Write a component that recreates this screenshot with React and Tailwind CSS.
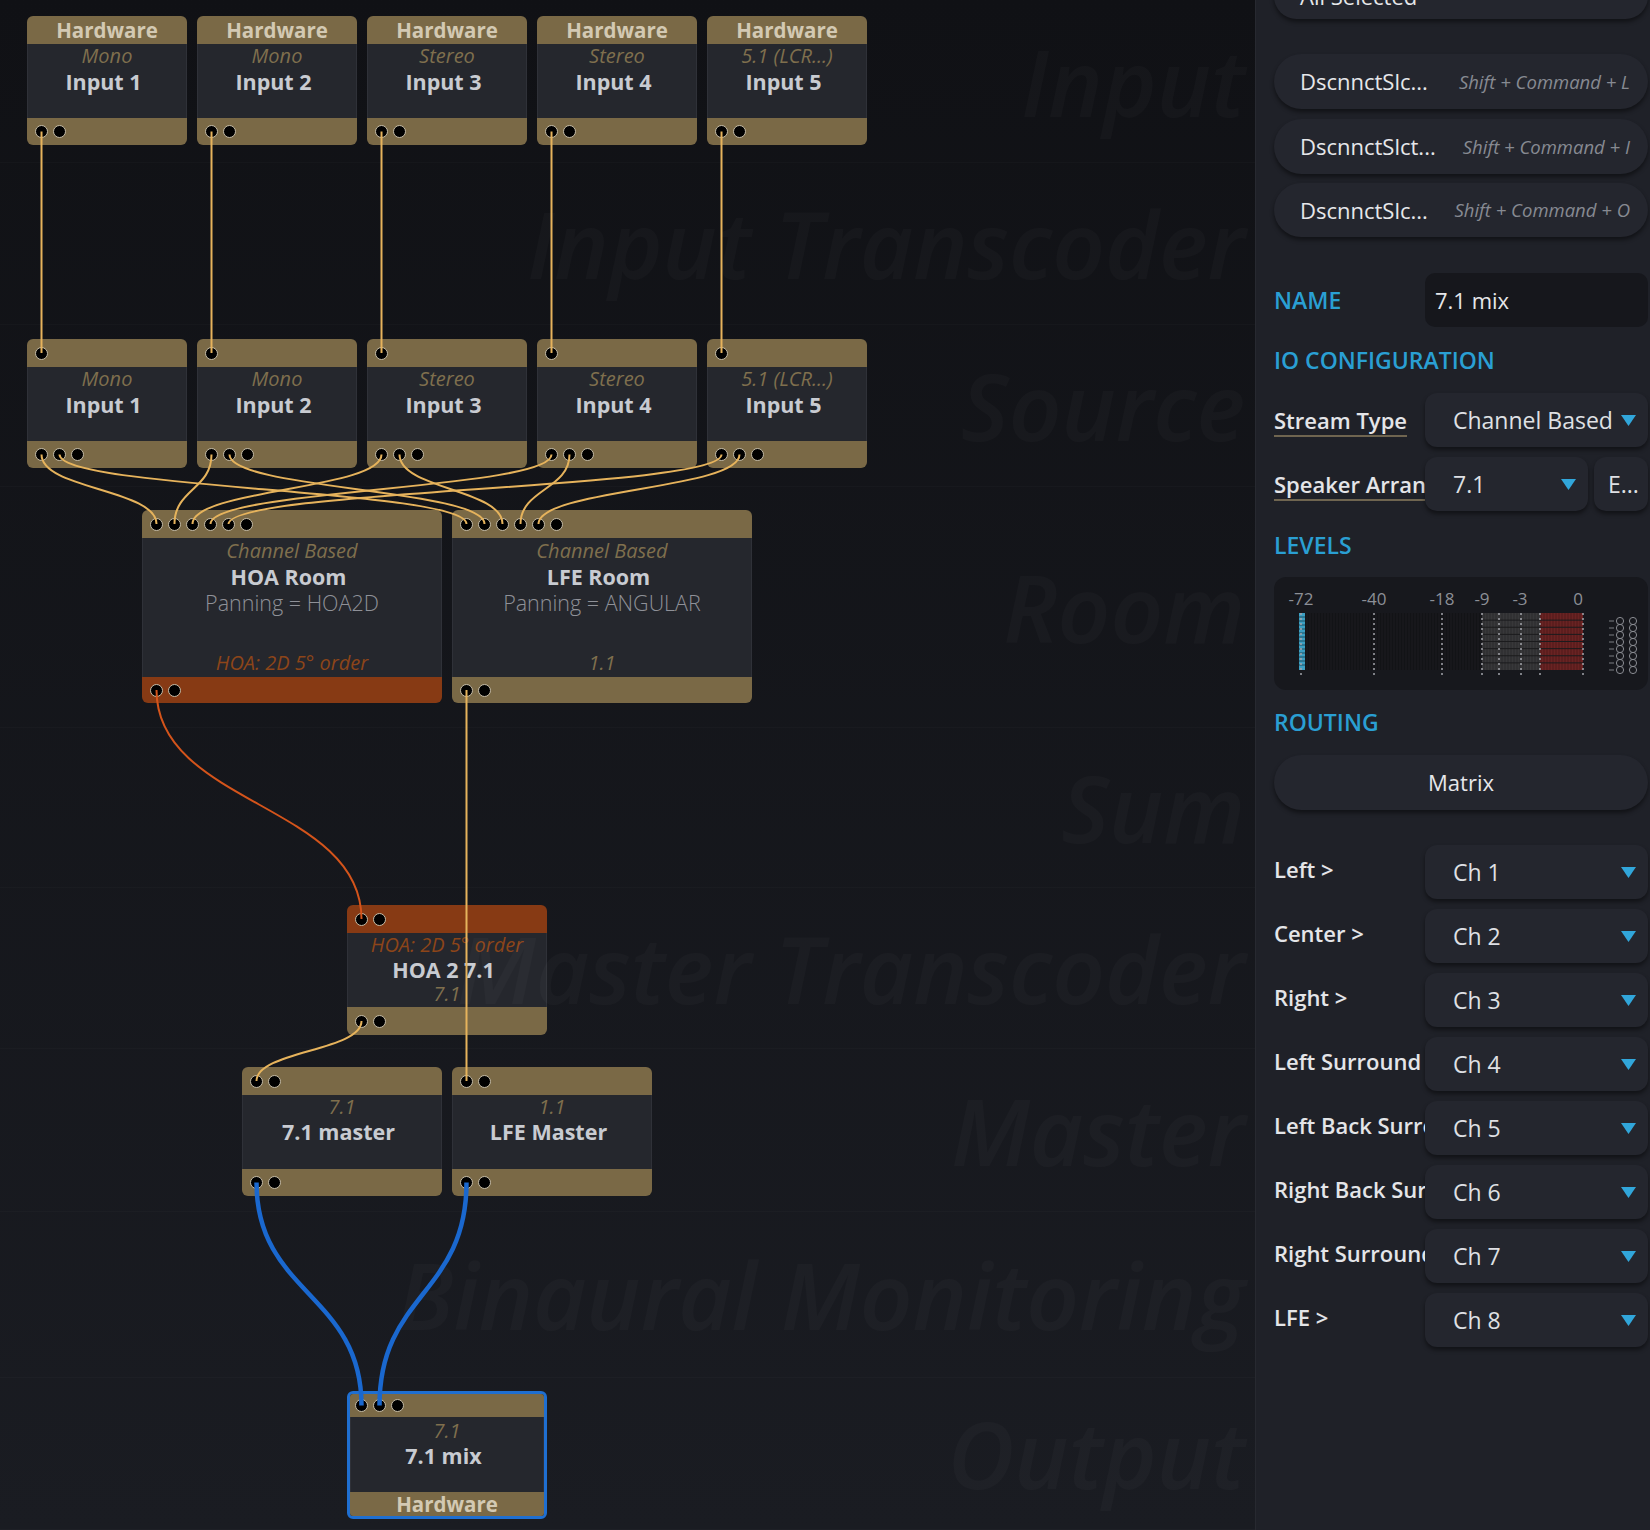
import React from 'react';

const lanes = [
  ['Input', 163],
  ['Input Transcoder', 162],
  ['Source', 162],
  ['Room', 241],
  ['Sum', 160],
  ['Master Transcoder', 161],
  ['Master', 163],
  ['Binaural Monitoring', 166],
  ['Output', 152],
];

const inputTypes = ['Mono', 'Mono', 'Stereo', 'Stereo', '5.1 (LCR...)'];

const Sub = ({ children, orange, className = '' }) => (
  <span className={`italic text-[20px] leading-[22px] ${orange ? 'text-[#8d4519]' : 'text-[#7f6f4d]'} ${className}`}>{children}</span>
);
const Title = ({ children, className = '' }) => (
  <span className={`pr-[7px] font-bold text-[21.5px] leading-[26px] text-[#c8cbd1] ${className}`}>{children}</span>
);

const Port = () => <span className="block h-[13px] w-[13px] shrink-0 rounded-full border-[1.5px] border-[#c6bda8] bg-black" />;

const Band = ({ h, tone, ports, label, pad }) => (
  <div
    className={`flex items-center ${tone === 'orange' ? 'bg-[#873a14]' : 'bg-[#7a6946]'} ${label ? 'justify-center' : ''}`}
    style={{ height: h }}
  >
    {label ? (
      <span className="text-[20.5px] font-bold leading-none text-[#d3c9b3]">{label}</span>
    ) : (
      <div className={`flex items-center gap-[5px] ${pad === 'tight' ? 'pl-[5px]' : 'pl-[8px]'}`}>
        {Array.from({ length: ports }).map((_, i) => (
          <Port key={i} />
        ))}
      </div>
    )}
  </div>
);

const Node = ({ n }) => (
  <div
    className={`absolute overflow-hidden rounded-[6px] ${n.selected ? 'border-[3px] border-[#1f6fd1]' : ''}`}
    style={{ left: n.x, top: n.y, width: n.w }}
  >
    <Band h={n.topH} tone={n.topTone} ports={n.topPorts} label={n.topLabel} pad={n.pad} />
    <div className="flex flex-col items-center border-x border-[#2f3138] bg-[#25272d]" style={{ height: n.bodyH }}>
      {n.body}
    </div>
    <Band h={n.bottomH} tone={n.bottomTone} ports={n.bottomPorts} label={n.bottomLabel} pad={n.pad} />
  </div>
);

const nodes = [];
inputTypes.forEach((t, i) => {
  nodes.push({
    x: 27 + 170 * i, y: 16, w: 160, topH: 28, topLabel: 'Hardware', bodyH: 74, bottomH: 27, bottomPorts: 2,
    body: (
      <>
        <Sub className="pt-[1px]">{t}</Sub>
        <Title className="mt-[2px]">Input {i + 1}</Title>
      </>
    ),
  });
  nodes.push({
    x: 27 + 170 * i, y: 339, w: 160, topH: 28, topPorts: 1, bodyH: 74, bottomH: 27, bottomPorts: 3,
    body: (
      <>
        <Sub className="pt-[1px]">{t}</Sub>
        <Title className="mt-[2px]">Input {i + 1}</Title>
      </>
    ),
  });
});
nodes.push({
  x: 142, y: 510, w: 300, topH: 28, topPorts: 6, bodyH: 139, bottomH: 26, bottomPorts: 2, bottomTone: 'orange',
  body: (
    <>
      <Sub className="leading-[26px]">Channel Based</Sub>
      <Title>HOA Room</Title>
      <span className="text-[21.5px] font-light leading-[26px] text-[#8f9198]">Panning = HOA2D</span>
      <Sub orange className="mt-auto mb-[1px] leading-[26px]">HOA: 2D 5° order</Sub>
    </>
  ),
});
nodes.push({
  x: 452, y: 510, w: 300, topH: 28, topPorts: 6, bodyH: 139, bottomH: 26, bottomPorts: 2,
  body: (
    <>
      <Sub className="leading-[26px]">Channel Based</Sub>
      <Title>LFE Room</Title>
      <span className="text-[21.5px] font-light leading-[26px] text-[#8f9198]">Panning = ANGULAR</span>
      <Sub className="mt-auto mb-[1px] leading-[26px]">1.1</Sub>
    </>
  ),
});
nodes.push({
  x: 347, y: 905, w: 200, topH: 28, topPorts: 2, topTone: 'orange', bodyH: 74, bottomH: 28, bottomPorts: 2,
  body: (
    <>
      <Sub orange className="leading-[24px]">HOA: 2D 5° order</Sub>
      <Title>HOA 2 7.1</Title>
      <Sub>7.1</Sub>
    </>
  ),
});
nodes.push({
  x: 242, y: 1067, w: 200, topH: 28, topPorts: 2, bodyH: 74, bottomH: 27, bottomPorts: 2,
  body: (
    <>
      <Sub className="pt-[1px]">7.1</Sub>
      <Title className="mt-[1px]">7.1 master</Title>
    </>
  ),
});
nodes.push({
  x: 452, y: 1067, w: 200, topH: 28, topPorts: 2, bodyH: 74, bottomH: 27, bottomPorts: 2,
  body: (
    <>
      <Sub className="pt-[1px]">1.1</Sub>
      <Title className="mt-[1px]">LFE Master</Title>
    </>
  ),
});
nodes.push({
  x: 347, y: 1391, w: 200, selected: true, pad: 'tight', topH: 23, topPorts: 3, bodyH: 75, bottomH: 24, bottomLabel: 'Hardware',
  body: (
    <>
      <Sub className="pt-[3px]">7.1</Sub>
      <Title className="mt-[1px]">7.1 mix</Title>
    </>
  ),
});

const curve = (x1, y1, x2, y2) => {
  const c = Math.max((y2 - y1) * 0.5, 20);
  return `M${x1} ${y1} C${x1} ${y1 + c} ${x2} ${y2 - c} ${x2} ${y2}`;
};

const Wires = () => {
  const gold = [];
  for (let i = 0; i < 5; i++) {
    const x = 27 + 170 * i + 14.5;
    gold.push(`M${x} 131.5 L${x} 353`);
    gold.push(curve(x, 454.5, 156.5 + 18 * i, 524));
    gold.push(curve(x + 18, 454.5, 466.5 + 18 * i, 524));
  }
  gold.push(`M466.5 690 L466.5 1081`);
  gold.push(curve(361.5, 1021, 256.5, 1081));
  return (
    <svg className="pointer-events-none absolute left-0 top-0" width="1255" height="1530" fill="none">
      {gold.map((d, i) => (
        <path key={i} d={d} stroke="#e6b35c" strokeWidth="2" />
      ))}
      <path d={curve(156.5, 690, 361.5, 919)} stroke="#d4541b" strokeWidth="2" />
      <path d={curve(256.5, 1182.5, 361.5, 1405.5)} stroke="#1a68cf" strokeWidth="4.5" />
      <path d={curve(466.5, 1182.5, 379.5, 1405.5)} stroke="#1a68cf" strokeWidth="4.5" />
    </svg>
  );
};

const Tri = () => (
  <svg width="15" height="11" viewBox="0 0 15 11" className="shrink-0">
    <polygon points="0,0 15,0 7.5,11" fill="#31a6da" />
  </svg>
);

const Pill = ({ label, keys, className }) => (
  <div className={`flex shrink-0 items-center justify-between rounded-full bg-[#24262e] pl-[26px] pr-[18px] shadow-[0_3px_4px_rgba(0,0,0,0.45)] ${className}`}>
    <span className="text-[22px] text-[#e6e7ea]">{label}</span>
    {keys && <span className="text-[18.5px] italic text-[#878a92]">{keys}</span>}
  </div>
);

const Select = ({ value, className = '' }) => (
  <div className={`flex h-[54px] items-center justify-between rounded-[12px] bg-[#24262e] pl-[28px] pr-[12px] shadow-[0_3px_4px_rgba(0,0,0,0.45)] ${className}`}>
    <span className="text-[23px] text-[#dfe0e4]">{value}</span>
    <Tri />
  </div>
);

const Heading = ({ children, className }) => (
  <div className={`h-[30px] text-[23px] font-semibold leading-[30px] text-[#2a9fd3] ${className}`}>{children}</div>
);

const Meter = () => {
  const ticks = [27, 100, 168, 208, 225, 247, 266, 309];
  const labels = [['-72', 27], ['-40', 100], ['-18', 168], ['-9', 208], ['-3', 246], ['0', 304]];
  const stripes = [];
  for (let x = 33; x < 309; x += 3) stripes.push(x);
  const rows = [1, 2, 3, 4, 5, 6, 7];
  const cells = [0, 1, 2, 3, 4, 5, 6, 7];
  return (
    <div className="mt-[17px] h-[113px] shrink-0 rounded-[12px] bg-[#17181d]">
      <svg width="374" height="113" className="block">
        <rect x="31" y="36" width="177" height="57" fill="#121316" />
        <rect x="208" y="36" width="58" height="57" fill="#38383a" />
        <rect x="266" y="36" width="43" height="57" fill="#6a2323" />
        {stripes.map((x) => (
          <line key={x} x1={x} y1="36" x2={x} y2="93" stroke={x < 208 ? '#1c1d21' : x < 266 ? '#2a2a2c' : '#511a1a'} strokeWidth="1" />
        ))}
        {rows.map((r) => (
          <line key={r} x1="208" y1={36 + r * 7.125} x2="309" y2={36 + r * 7.125} stroke="#1b1b1d" strokeWidth="1" />
        ))}
        <rect x="25" y="36" width="6" height="57" fill="#3c9fc2" />
        {[40, 44, 48, 52, 56, 60, 64, 68, 72, 76, 80, 84, 88].map((y) => (
          <line key={y} x1="25" y1={y} x2="31" y2={y} stroke="#1d4f61" strokeWidth="1" />
        ))}
        {ticks.map((x) => (
          <line key={x} x1={x} y1="36" x2={x} y2="99" stroke="#a2a4aa" strokeWidth="1.5" strokeDasharray="2 3" />
        ))}
        {labels.map(([t, x]) => (
          <text key={t} x={x} y="28" fontSize="17" fill="#8c8f96" textAnchor="middle" fontFamily="'Open Sans', sans-serif">
            {t}
          </text>
        ))}
        {cells.map((c) => (
          <g key={c}>
            <line x1="335" y1={44 + c * 7} x2="340" y2={44 + c * 7} stroke="#7c7e84" strokeWidth="1" />
            <circle cx="346" cy={44 + c * 7} r="3.6" fill="none" stroke="#8a8c92" strokeWidth="1" />
            <circle cx="359" cy={44 + c * 7} r="3.6" fill="none" stroke="#8a8c92" strokeWidth="1" />
          </g>
        ))}
      </svg>
    </div>
  );
};

const routes = [
  ['Left >', 'Ch 1'],
  ['Center >', 'Ch 2'],
  ['Right >', 'Ch 3'],
  ['Left Surround >', 'Ch 4'],
  ['Left Back Surround >', 'Ch 5'],
  ['Right Back Surround >', 'Ch 6'],
  ['Right Surround >', 'Ch 7'],
  ['LFE >', 'Ch 8'],
];

const Row = ({ label, children, className = '', accent }) => (
  <div className={`flex h-[54px] shrink-0 items-center ${className}`}>
    <div
      className={`w-[151px] shrink-0 overflow-hidden whitespace-nowrap font-semibold ${
        accent ? 'text-[23px] text-[#2a9fd3]' : 'text-[22px] text-[#e4e5e8]'
      }`}
    >
      {label}
    </div>
    {children}
  </div>
);

export default function App() {
  return (
    <div className="flex h-[1530px] w-[1650px] overflow-hidden bg-[#111216] font-['Open_Sans',sans-serif]">
      <div className="relative h-full w-[1255px] shrink-0 bg-linear-to-b from-[#101115] to-[#1a1c22]">
        <div className="flex h-full flex-col">
          {lanes.map(([name, h]) => (
            <div key={name} className="shrink-0 border-b border-white/[0.02]" style={{ height: h }} />
          ))}
        </div>
        {nodes.map((n, i) => (
          <Node key={i} n={n} />
        ))}
        <div className="pointer-events-none absolute inset-0 flex flex-col">
          {lanes.map(([name, h]) => (
            <div key={name} className="flex shrink-0 items-center justify-end pr-[10px]" style={{ height: h }}>
              <span className="whitespace-nowrap text-[92px] font-semibold italic leading-none text-white/[0.022]">{name}</span>
            </div>
          ))}
        </div>
        <Wires />
      </div>

      <aside className="flex h-full w-[395px] shrink-0 flex-col border-l border-[#272930] bg-[#1f2128] pl-[18px] pr-[2px]">
        <Pill className="-mt-[26px] h-[45px]" label="All Selected" />
        <Pill className="mt-[35px] h-[55px]" label="DscnnctSlc..." keys="Shift + Command + L" />
        <Pill className="mt-[10px] h-[55px]" label="DscnnctSlct..." keys="Shift + Command + I" />
        <Pill className="mt-[9px] h-[54px]" label="DscnnctSlc..." keys="Shift + Command + O" />

        <Row className="mt-[36px]" label="NAME" accent>
          <div className="flex h-full flex-1 items-center rounded-[10px] bg-[#16171c] pl-[10px] text-[22px] text-[#e6e7ea]">7.1 mix</div>
        </Row>

        <Heading className="mt-[18px]">IO CONFIGURATION</Heading>
        <Row className="mt-[18px]" label={<span className="underline decoration-[#6f6550] decoration-2 underline-offset-[6px]">Stream Type</span>}>
          <Select className="flex-1" value="Channel Based" />
        </Row>
        <Row className="mt-[10px]" label={<span className="underline decoration-[#6f6550] decoration-2 underline-offset-[6px]">Speaker Arrangement</span>}>
          <Select className="w-[163px]" value="7.1" />
          <div className="ml-[6px] flex h-full flex-1 items-center rounded-[12px] bg-[#24262e] pl-[14px] text-[23px] text-[#dfe0e4] shadow-[0_3px_4px_rgba(0,0,0,0.45)]">
            E...
          </div>
        </Row>

        <Heading className="mt-[19px]">LEVELS</Heading>
        <Meter />

        <Heading className="mt-[17px]">ROUTING</Heading>
        <div className="mt-[18px] flex h-[55px] shrink-0 items-center justify-center rounded-full bg-[#24262e] text-[22px] text-[#e6e7ea] shadow-[0_3px_4px_rgba(0,0,0,0.45)]">
          Matrix
        </div>

        <div className="mt-[35px] flex flex-col gap-[10px]">
          {routes.map(([l, v]) => (
            <Row key={l} label={<span className="relative -top-[3px]">{l}</span>}>
              <Select className="flex-1" value={v} />
            </Row>
          ))}
        </div>
      </aside>
    </div>
  );
}
